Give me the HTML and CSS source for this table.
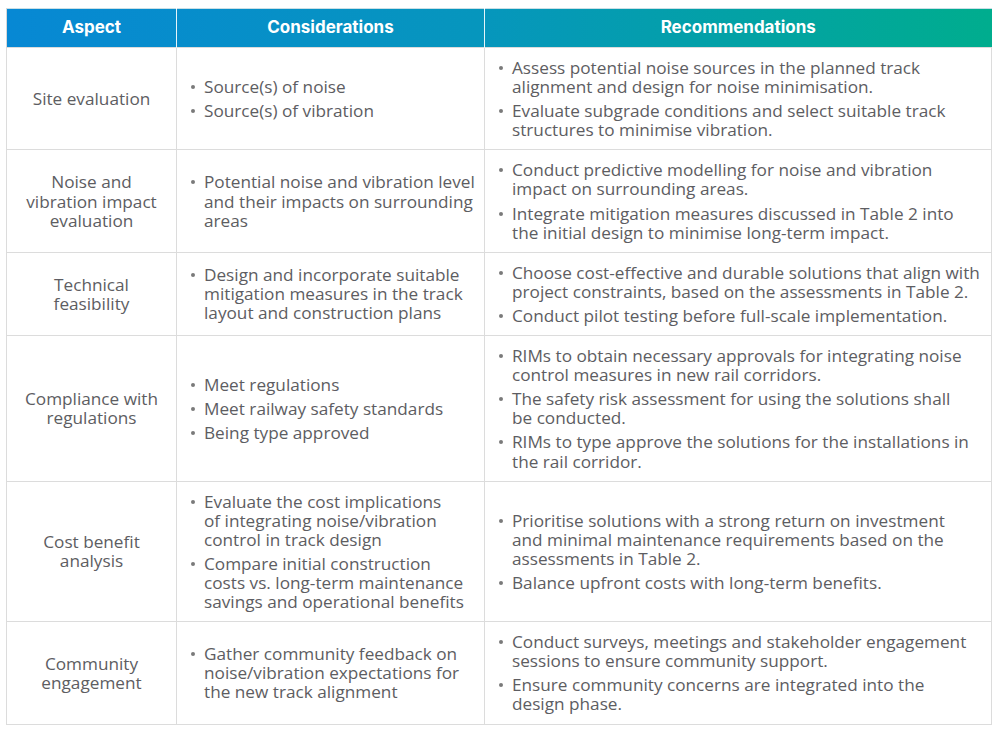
FILE: index.html
```html
<!DOCTYPE html>
<html lang="en">
<head>
<meta charset="utf-8">
<title>Noise and vibration considerations</title>
<link rel="stylesheet" href="styles.css">
</head>
<body>
<div class="page">
<table class="matrix">
  <colgroup>
    <col class="c-aspect">
    <col class="c-cons">
    <col class="c-rec">
  </colgroup>
  <thead>
    <tr>
      <th>Aspect</th>
      <th>Considerations</th>
      <th>Recommendations</th>
    </tr>
  </thead>
  <tbody>
    <tr>
      <td class="aspect">Site evaluation</td>
      <td><ul class="list">
        <li>Source(s) of noise</li>
        <li>Source(s) of vibration</li>
      </ul></td>
      <td><ul class="list">
        <li>Assess potential noise sources in the planned track<br>alignment and design for noise minimisation.</li>
        <li>Evaluate subgrade conditions and select suitable track<br>structures to minimise vibration.</li>
      </ul></td>
    </tr>
    <tr>
      <td class="aspect">Noise and<br>vibration impact<br>evaluation</td>
      <td><ul class="list">
        <li>Potential noise and vibration level<br>and their impacts on surrounding<br>areas</li>
      </ul></td>
      <td><ul class="list">
        <li>Conduct predictive modelling for noise and vibration<br>impact on surrounding areas.</li>
        <li>Integrate mitigation measures discussed in Table 2 into<br>the initial design to minimise long-term impact.</li>
      </ul></td>
    </tr>
    <tr>
      <td class="aspect">Technical<br>feasibility</td>
      <td><ul class="list">
        <li>Design and incorporate suitable<br>mitigation measures in the track<br>layout and construction plans</li>
      </ul></td>
      <td><ul class="list">
        <li>Choose cost-effective and durable solutions that align with<br>project constraints, based on the assessments in Table 2.</li>
        <li>Conduct pilot testing before full-scale implementation.</li>
      </ul></td>
    </tr>
    <tr>
      <td class="aspect">Compliance with<br>regulations</td>
      <td><ul class="list">
        <li>Meet regulations</li>
        <li>Meet railway safety standards</li>
        <li>Being type approved</li>
      </ul></td>
      <td><ul class="list">
        <li>RIMs to obtain necessary approvals for integrating noise<br>control measures in new rail corridors.</li>
        <li>The safety risk assessment for using the solutions shall<br>be conducted.</li>
        <li>RIMs to type approve the solutions for the installations in<br>the rail corridor.</li>
      </ul></td>
    </tr>
    <tr>
      <td class="aspect">Cost benefit<br>analysis</td>
      <td><ul class="list">
        <li>Evaluate the cost implications<br>of integrating noise/vibration<br>control in track design</li>
        <li>Compare initial construction<br>costs vs. long-term maintenance<br>savings and operational benefits</li>
      </ul></td>
      <td><ul class="list">
        <li>Prioritise solutions with a strong return on investment<br>and minimal maintenance requirements based on the<br>assessments in Table 2.</li>
        <li>Balance upfront costs with long-term benefits.</li>
      </ul></td>
    </tr>
    <tr>
      <td class="aspect">Community<br>engagement</td>
      <td><ul class="list">
        <li>Gather community feedback on<br>noise/vibration expectations for<br>the new track alignment</li>
      </ul></td>
      <td><ul class="list">
        <li>Conduct surveys, meetings and stakeholder engagement<br>sessions to ensure community support.</li>
        <li>Ensure community concerns are integrated into the<br>design phase.</li>
      </ul></td>
    </tr>
  </tbody>
</table>
</div>
</body>
</html>
```
FILE: styles.css
```css
html, body {
  margin: 0;
  padding: 0;
  background: #ffffff;
}

.page {
  padding: 8px 0 0 6px;
}

.matrix {
  width: 985px;
  border-collapse: collapse;
  table-layout: fixed;
  font-family: "Open Sans", "Noto Sans", sans-serif;
  font-size: 17.2px;
  line-height: 19.1px;
  color: #5d5d62;
}

.c-aspect { width: 170px; }
.c-cons { width: 308px; }
.c-rec { width: 507px; }

.matrix thead tr {
  background: linear-gradient(90deg, #0788d4 0%, #0696bd 48%, #00ad8e 100%);
  border-top: 1px solid #c9dfe6;
}

.matrix th {
  height: 38px;
  padding: 0;
  font-family: Inter, Roboto, "Liberation Sans", sans-serif;
  font-weight: 700;
  font-size: 17px;
  color: #ffffff;
  text-align: center;
  vertical-align: middle;
  border-left: 1px solid rgba(255, 255, 255, 0.9);
}

.matrix th:first-child {
  border-left: 1px solid #d8d8d8;
}

.matrix td {
  border: 1px solid #dcdcdc;
  vertical-align: middle;
  padding: 10px 4px 10px 13px;
  white-space: nowrap;
}

.matrix td.aspect {
  text-align: center;
  padding: 10px 4px;
}

.list {
  list-style: none;
  margin: 0;
  padding: 0;
}

.list li {
  position: relative;
  padding-left: 14px;
}

.list li + li {
  margin-top: 5px;
}

.list li::before {
  content: "";
  position: absolute;
  left: 1px;
  top: 8px;
  width: 4px;
  height: 4px;
  border-radius: 50%;
  background: #7a7a7a;
}
```
